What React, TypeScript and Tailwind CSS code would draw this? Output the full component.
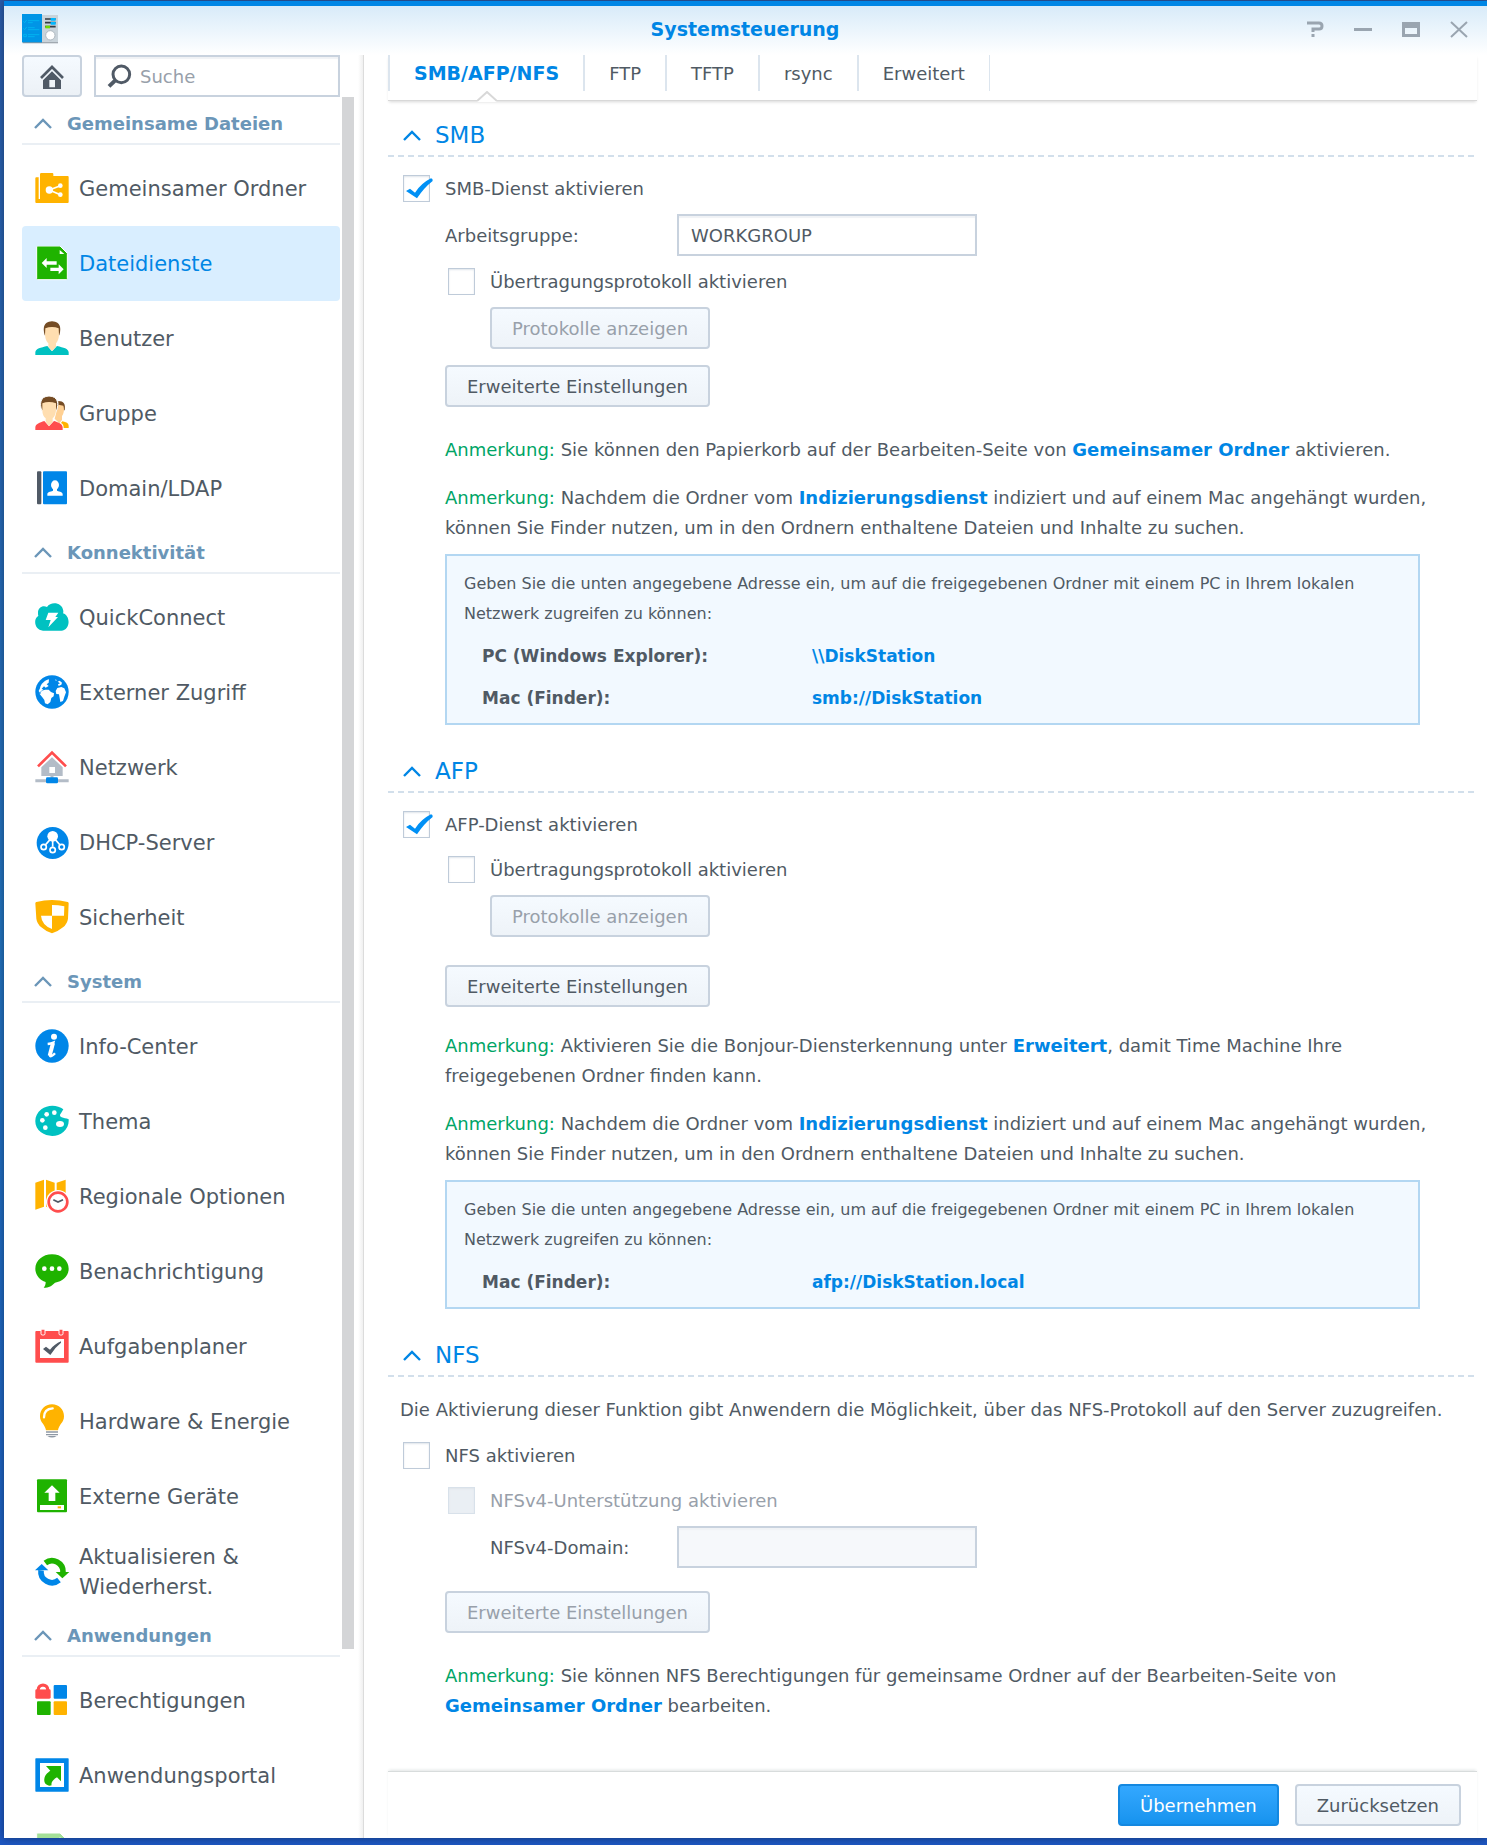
import { useState } from "react";
import type { ReactNode } from "react";
import clsx from "clsx";

interface NavItem {
  label: string;
  icon: ReactNode;
}

interface NavGroup {
  title: string;
  items: NavItem[];
}

const Icon = ({ children }: { children: ReactNode }) => (
  <svg
    viewBox="0 0 105 105"
    className="size-[35px] shrink-0"
    fill="none"
    aria-hidden="true"
  >
    {children}
  </svg>
);

const SharedFolderIcon = () => (
  <Icon>
    <path
      fill="#ffb300"
      d="M1 22q0-3 3-3h11v-9q0-4 4-4h33q3 0 3 3v6h43q3 0 3 3v75q0 3-3 3H4q-3 0-3-3z"
    />
    <path d="M13 6v78" stroke="#fff" strokeWidth="4" />
    <path d="M76 44 43 57l33 14" stroke="#fff" strokeWidth="5" />
    <circle cx="43" cy="57" r="11" fill="#fff" />
    <circle cx="76" cy="44" r="7" fill="#fff" />
    <circle cx="76" cy="71" r="7" fill="#fff" />
  </Icon>
);

const FileServicesIcon = () => (
  <Icon>
    <path
      fill="#1fb300"
      stroke="#fff"
      strokeWidth="3"
      d="M8 0h67l22 22v76q0 3-3 3H8q-3 0-3-3V3q0-3 3-3z"
    />
    <path fill="#fff" d="M74 12v12h14z" />
    <path
      fill="#fff"
      d="M20 51 35 36v10h30v10H35v10zM86 70 71 85V75H46V65h25V55z"
    />
  </Icon>
);

const UserIcon = () => (
  <Icon>
    <path
      fill="#754c24"
      d="M29 43C24 25 23 2 51 1c28 1 27 24 22 42z"
    />
    <path
      fill="#00c1c1"
      d="M1 102v-8c1-12 16-14 36-19l14 16 15-16c20 5 34 7 35 19v8z"
    />
    <path
      fill="#ffdeb0"
      d="M31 22q20-8 40 0l1 20c-1 14-5 20-9 25v10L51 90 40 77V67c-5-5-9-12-10-25z"
    />
  </Icon>
);

const GroupIcon = () => (
  <Icon>
    <path fill="#754c24" d="M70 15c16 0 22 8 19 28H70z" />
    <path
      fill="#ffd093"
      d="M70 26q8 2 15 3c4 12 1 25-4 31v12l-8 10-14-14z"
    />
    <path fill="#ffb300" d="M82 76c12 2 19 6 19 13v7H86c0-8-2-12-8-15z" />
    <path
      fill="#754c24"
      stroke="#fff"
      strokeWidth="3"
      d="M20 43C14 25 14 1 42 0c29 1 29 25 23 43z"
    />
    <path
      fill="#ff4d4d"
      d="M1 102v-8c1-11 13-14 27-19l14 16 15-16c15 5 25 8 26 19v8z"
    />
    <path
      fill="#ffdeb0"
      d="M22 22q20-8 41 0v20c-1 14-5 20-10 25v10L42 90 32 77V67c-6-5-10-12-10-25z"
    />
  </Icon>
);

const DomainIcon = () => (
  <Icon>
    <rect x="6" y="1" width="13" height="99" rx="3" fill="#505a66" />
    <rect x="24" y="1" width="72" height="99" rx="3" fill="#0086e8" />
    <ellipse cx="60" cy="42" rx="12" ry="14" fill="#fff" />
    <path
      fill="#fff"
      d="M54 50h12v9c9 4 17 3 17 11v4H37v-4c0-8 8-7 17-11z"
    />
  </Icon>
);

const QuickConnectIcon = () => (
  <Icon>
    <path
      fill="#00c1c1"
      d="M24 92C-2 90-6 56 10 48 4 24 22 14 36 21c12-18 46-14 49 12 0 4 0 5-1 7 24 8 22 50-5 52z"
    />
    <path fill="#fff" d="M40 38h30l-9 13h8L40 82l7-22H32z" />
  </Icon>
);

const GlobeIcon = () => (
  <Icon>
    <circle cx="51" cy="51" r="50" fill="#0086e8" />
    <path
      fill="#fff"
      d="M42 13C28 17 17 27 15 40l-4 8 7 10-1-8 8-4 6-2 10 0 7 7 9 4-1 9-7 5-3 12-8 7-8-3-2-10-6-8-8-10 3-8 8-5-5-3 7-7 5 4 9-5-6-5 6-5z"
    />
    <path
      fill="#fff"
      d="m62 48 5-9 12-3 9 4 5 12-5 13-4 13-8 3-2-12-2-11-8-1zM61 13l5 3-4 1zM68 20l6-3 7 6-2 6-8 4-2-5 6-3z"
    />
  </Icon>
);

const NetworkIcon = () => (
  <Icon>
    <path d="M9 49 51 8l42 41" stroke="#ff4d4d" strokeWidth="8" />
    <path
      fill="#b3bcc7"
      fillRule="evenodd"
      d="M51 22 19 52v26h64V52zM43 51h17v18H43z"
    />
    <path d="M1 92h100M51 78v10" stroke="#b3bcc7" strokeWidth="9" />
    <rect x="33" y="82" width="36" height="18" rx="4" fill="#0086e8" />
  </Icon>
);

const DhcpIcon = () => (
  <Icon>
    <circle cx="53" cy="54" r="48" fill="#0086e8" />
    <circle cx="53" cy="34" r="16" fill="#fff" />
    <g stroke="#fff" strokeWidth="5">
      <path d="M53 45v20M45 44 31 60M61 44l14 16" />
      <circle cx="26" cy="66" r="8" />
      <circle cx="53" cy="75" r="8" />
      <circle cx="80" cy="66" r="8" />
    </g>
  </Icon>
);

const ShieldIcon = () => (
  <Icon>
    <path
      fill="#ffb300"
      d="M4 6q47-12 94 0 3 1 3 4l-2 46q-2 15-15 26-14 12-33 18-19-6-32-18Q6 71 4 56L1 10q0-3 3-4z"
    />
    <path fill="#fff" d="M51 15q18 0 37 4l-1 28H51zM18 47h33v40Q20 75 18 47z" />
  </Icon>
);

const InfoIcon = () => (
  <Icon>
    <circle cx="51" cy="51" r="50" fill="#0086e8" />
    <circle cx="57" cy="23" r="9" fill="#fff" />
    <path
      d="M38 45q11-1 17-4L45 75q-2 9 5 6 5-2 10-8"
      stroke="#fff"
      strokeWidth="7"
    />
    <path d="M54 42 44 80" stroke="#fff" strokeWidth="12" />
  </Icon>
);

const ThemeIcon = () => (
  <Icon>
    <path
      fill="#00c1c1"
      d="M85 16C68 2 38 1 19 16c-24 18-24 52-1 69 20 15 50 14 67-1 12-10 17-24 16-38-8-3-15-4-21-6q-9-4-2-12z"
    />
    <g fill="#fff">
      <circle cx="58" cy="26" r="7" />
      <circle cx="35" cy="31" r="7" />
      <circle cx="22" cy="49" r="7" />
      <circle cx="31" cy="71" r="7" />
      <ellipse cx="75" cy="60" rx="12" ry="9" />
    </g>
  </Icon>
);

const RegionIcon = () => (
  <Icon>
    <path
      fill="#ffb300"
      d="m1 11 26-9v81L1 92zM33 2l26 9v81l-26-9zM65 11l27-9v81l-27 9z"
    />
    <circle cx="69" cy="69" r="36" fill="#fff" />
    <circle cx="69" cy="69" r="28" stroke="#ff4d4d" strokeWidth="8" />
    <path d="m55 62 14 7 15-7" stroke="#505a66" strokeWidth="5" />
  </Icon>
);

const NotificationIcon = () => (
  <Icon>
    <path
      fill="#1fb300"
      d="M51 1c28 0 50 19 50 43 0 23-19 38-41 42-9 9-18 15-34 15 4-4 6-9 6-17C14 78 1 63 1 44 1 20 23 1 51 1z"
    />
    <circle cx="28" cy="44" r="7" fill="#fff" />
    <circle cx="51" cy="44" r="7" fill="#fff" />
    <circle cx="73" cy="44" r="7" fill="#fff" />
  </Icon>
);

const SchedulerIcon = () => (
  <Icon>
    <rect x="1" y="6" width="100" height="95" rx="3" fill="#ff4d4d" />
    <rect x="15" y="30" width="72" height="57" fill="#fff" />
    <rect
      x="18"
      y="1"
      width="12"
      height="17"
      rx="4"
      fill="#ff4d4d"
      stroke="#fff"
      strokeWidth="3"
    />
    <rect
      x="72"
      y="1"
      width="12"
      height="17"
      rx="4"
      fill="#ff4d4d"
      stroke="#fff"
      strokeWidth="3"
    />
    <path fill="#505a66" d="m24 60 9-7 12 9q14-17 33-25v4Q60 55 46 78z" />
  </Icon>
);

const EnergyIcon = () => (
  <Icon>
    <path
      fill="#ffb300"
      d="M51 1c21 0 36 16 36 36 0 19-15 24-18 42H33C30 61 15 56 15 37 15 17 30 1 51 1z"
    />
    <path
      d="M27 40c0-16 9-26 26-27"
      stroke="#fff"
      strokeWidth="7"
      strokeLinecap="round"
    />
    <path fill="#8e98a4" d="M33 82h36v4H33zM33 90h36v4H33zM37 96h28q-14 9-28 0z" />
  </Icon>
);

const ExternalDeviceIcon = () => (
  <Icon>
    <rect x="6" y="1" width="90" height="99" rx="3" fill="#1fb300" />
    <path fill="#fff" d="m51 19 23 22H61v25H41V41H28zM15 78h72v15H15z" />
    <path fill="#ffb300" d="M68 82h10v6H68z" />
  </Icon>
);

const UpdateIcon = () => (
  <Icon>
    <path d="M31 27a33 33 0 0 1 53 28" stroke="#1fb300" strokeWidth="17" />
    <path fill="#1fb300" d="M62 54h41L82 73z" />
    <path d="M72 78a33 33 0 0 1-54-29" stroke="#0086e8" strokeWidth="17" />
    <path fill="#0086e8" d="M0 49h40L20 30z" />
  </Icon>
);

const PrivilegesIcon = () => (
  <Icon>
    <path
      d="M10 26v-6c0-18 28-18 28 0v6"
      stroke="#ff4d4d"
      strokeWidth="10"
    />
    <rect x="1" y="19" width="46" height="28" rx="4" fill="#ff4d4d" />
    <path fill="#fff" d="M14 19q10-15 19 0z" />
    <rect x="56" y="6" width="40" height="41" rx="3" fill="#0086e8" />
    <rect x="6" y="55" width="41" height="41" rx="3" fill="#1fb300" />
    <rect x="56" y="55" width="40" height="41" rx="3" fill="#ffb300" />
  </Icon>
);

const PortalIcon = () => (
  <Icon>
    <rect x="1" y="1" width="100" height="100" rx="2" fill="#0086e8" />
    <rect x="15" y="15" width="72" height="72" fill="#fff" />
    <path
      fill="#1fb300"
      d="M33 24h45v46L66 58q-20 12-16 24C36 86 26 76 28 63c1-12 9-18 18-25z"
    />
  </Icon>
);

const navGroups: NavGroup[] = [
  {
    title: "Gemeinsame Dateien",
    items: [
      { label: "Gemeinsamer Ordner", icon: <SharedFolderIcon /> },
      { label: "Dateidienste", icon: <FileServicesIcon /> },
      { label: "Benutzer", icon: <UserIcon /> },
      { label: "Gruppe", icon: <GroupIcon /> },
      { label: "Domain/LDAP", icon: <DomainIcon /> },
    ],
  },
  {
    title: "Konnektivität",
    items: [
      { label: "QuickConnect", icon: <QuickConnectIcon /> },
      { label: "Externer Zugriff", icon: <GlobeIcon /> },
      { label: "Netzwerk", icon: <NetworkIcon /> },
      { label: "DHCP-Server", icon: <DhcpIcon /> },
      { label: "Sicherheit", icon: <ShieldIcon /> },
    ],
  },
  {
    title: "System",
    items: [
      { label: "Info-Center", icon: <InfoIcon /> },
      { label: "Thema", icon: <ThemeIcon /> },
      { label: "Regionale Optionen", icon: <RegionIcon /> },
      { label: "Benachrichtigung", icon: <NotificationIcon /> },
      { label: "Aufgabenplaner", icon: <SchedulerIcon /> },
      { label: "Hardware & Energie", icon: <EnergyIcon /> },
      { label: "Externe Geräte", icon: <ExternalDeviceIcon /> },
      { label: "Aktualisieren & Wiederherst.", icon: <UpdateIcon /> },
    ],
  },
  {
    title: "Anwendungen",
    items: [
      { label: "Berechtigungen", icon: <PrivilegesIcon /> },
      { label: "Anwendungsportal", icon: <PortalIcon /> },
    ],
  },
];

const tabs = ["SMB/AFP/NFS", "FTP", "TFTP", "rsync", "Erweitert"];

const Chevron = () => (
  <svg
    viewBox="0 0 18 11"
    className="h-[11px] w-[18px] shrink-0"
    fill="none"
    stroke="currentColor"
    strokeWidth="2.4"
    aria-hidden="true"
  >
    <path d="m1 10 8-8 8 8" />
  </svg>
);

const TitleBar = () => (
  <header className="grid h-[49px] shrink-0 grid-cols-[1fr_auto_1fr] items-center bg-linear-to-b from-[#d8ebf9] to-white pr-[19px] pb-[3px] pl-[18px]">
    <svg viewBox="0 0 108 90" className="h-[30px] w-9" aria-hidden="true">
      <path fill="#8d959b" d="M2 84h106v4H2z" />
      <path fill="#0095e6" d="M0 0h60v85H0z" />
      <path fill="#c9d3da" d="M60 3h48v82H60z" />
      <g stroke="#00b4f0" strokeWidth="3" fill="none">
        <path d="m4 22 4 4 6-8M18 20h34M18 26h14M4 43l4 4 6-8M18 41h20M18 47h34M5 61h8v7H5zM18 62h34M18 68h20" />
      </g>
      <g strokeWidth="5">
        <path d="M69 15h32M69 26h32M69 38h32" stroke="#333b42" />
        <path d="M86 16h15M86 28h15" stroke="#00b7ff" strokeWidth="8" />
        <path d="M70 39h14" stroke="#6ddc00" strokeWidth="8" />
      </g>
      <circle cx="85" cy="64" r="14" fill="#fff" stroke="#aeb8c0" strokeWidth="3" />
    </svg>
    <h1 className="text-[19px] leading-7 font-bold text-[#0086e5]">
      Systemsteuerung
    </h1>
    <div className="flex justify-end gap-[30px]">
      <button aria-label="Hilfe">
        <svg viewBox="0 0 18 18" className="size-[18px]" fill="none">
          <path
            d="M1 3h12q3 0 3 3t-3 3H7v3M7 14v3"
            stroke="#9aa5b0"
            strokeWidth="3"
          />
        </svg>
      </button>
      <button aria-label="Minimieren">
        <svg viewBox="0 0 18 18" className="size-[18px]">
          <path d="M0 8h18v3H0z" fill="#9aa5b0" />
        </svg>
      </button>
      <button aria-label="Maximieren">
        <svg viewBox="0 0 18 18" className="size-[18px]">
          <path
            fill="#9aa5b0"
            fillRule="evenodd"
            d="M0 2h18v15H0zM3 8v6h12V8z"
          />
        </svg>
      </button>
      <button aria-label="Schließen">
        <svg viewBox="0 0 18 18" className="size-[18px]">
          <path d="m1 2 16 15M17 2 1 17" stroke="#9aa5b0" strokeWidth="2" />
        </svg>
      </button>
    </div>
  </header>
);

const Sidebar = () => {
  const [active, setActive] = useState("Dateidienste");

  return (
    <aside className="flex w-[360px] shrink-0 flex-col border-r border-[#dcdcdc] bg-linear-to-l from-[#f0f0f0] to-white to-[5px] pl-[18px]">
      <div className="flex w-[318px] gap-3">
        <button
          aria-label="Startseite"
          className="flex h-[42px] w-[60px] items-center justify-center rounded-[4px] border-2 border-[#c8d2de] bg-linear-to-b from-[#f5faff] to-[#ecf1f6]"
        >
          <svg viewBox="0 0 72 75" className="h-[25px] w-6" fill="#505a66">
            <path
              d="M3 42 36 9l33 33"
              fill="none"
              stroke="#505a66"
              strokeWidth="8"
            />
            <path
              fillRule="evenodd"
              d="m36 22 27 27v26H9V49zM28 48v22h17V48z"
            />
          </svg>
        </button>
        <label className="flex h-[42px] min-w-0 flex-1 items-center gap-2 border-2 border-[#c8d2de] bg-white pl-[11px] inset-shadow-[0_2px_1px_#f0f2f5]">
          <svg
            viewBox="0 0 75 75"
            className="size-[25px] shrink-0"
            fill="none"
            stroke="#505a66"
            aria-hidden="true"
          >
            <circle cx="43" cy="31" r="25" strokeWidth="9" />
            <path d="M24 50 6 67" strokeWidth="12" />
          </svg>
          <input
            type="search"
            aria-label="Suche"
            placeholder="Suche"
            className="w-full min-w-0 text-[18px] outline-none placeholder:text-[#98a0aa]"
          />
        </label>
      </div>

      <div className="flex min-h-0 flex-1">
        <nav className="w-[318px] overflow-hidden">
          {navGroups.map((group) => (
            <section key={group.title}>
              <h2 className="mb-1.5 border-b-2 border-[#eaeff4] pl-3">
                <button className="flex h-[46px] items-center gap-[15px] pt-[7px] text-[18px] font-bold text-[#6b96b8]">
                  <Chevron />
                  {group.title}
                </button>
              </h2>
              <ul>
                {group.items.map((item) => (
                  <li key={item.label}>
                    <a
                      href="#"
                      onClick={(e) => {
                        e.preventDefault();
                        setActive(item.label);
                      }}
                      className={clsx(
                        "flex h-[75px] items-center gap-[9px] rounded-[4px] pl-[13px] text-[21px] leading-[30px]",
                        item.label === active && "bg-[#d9eeff] text-[#0086e5]",
                      )}
                    >
                      {item.icon}
                      <span>{item.label}</span>
                    </a>
                  </li>
                ))}
              </ul>
            </section>
          ))}
          <div className="flex h-[75px] items-center pl-[13px] opacity-40">
            <FileServicesIcon />
          </div>
        </nav>
        <div className="mb-[189px] ml-0.5 w-3 bg-[#d4d5d7]" />
      </div>
    </aside>
  );
};

const TabBar = () => {
  const [active, setActive] = useState(tabs[0]);

  return (
    <div
      role="tablist"
      className="flex h-[46px] shrink-0 items-start border-b border-[#d8d8d8] shadow-[0_2px_3px_-1px_#d8d8d8]"
    >
      {tabs.map((tab) => (
        <button
          key={tab}
          role="tab"
          aria-selected={tab === active}
          onClick={() => setActive(tab)}
          className={clsx(
            "relative h-9 border-r-2 border-[#dce5ee] px-6 first:border-l-2 last:border-r",
            tab === active
              ? "text-[19px] font-bold text-[#0086e5]"
              : "text-[18px]",
          )}
        >
          {tab}
          {tab === active && (
            <svg
              viewBox="0 0 20 11"
              className="absolute top-9 left-1/2 h-[11px] w-5 -translate-x-1/2"
              aria-hidden="true"
            >
              <path d="m0 9 10-9 10 9v2H0z" fill="#fff" />
              <path d="m0 10 10-9 10 9" fill="none" stroke="#d8d8d8" strokeWidth="2" />
            </svg>
          )}
        </button>
      ))}
    </div>
  );
};

const Section = ({ title, children }: { title: string; children: ReactNode }) => (
  <section className="mb-[31px]">
    <h2 className="pb-[5px] pl-[15px] text-[23px] leading-[30px] text-[#0086e5]">
      <button className="flex items-center gap-[14px]">
        <Chevron />
        {title}
      </button>
    </h2>
    <div className="h-0.5 bg-[repeating-linear-gradient(to_right,#d2dfeb_0_6px,transparent_6px_10px)]" />
    <div className="pt-[18px]">{children}</div>
  </section>
);

interface CheckboxProps {
  label: string;
  checked?: boolean;
  disabled?: boolean;
  className?: string;
}

const Checkbox = ({ label, checked, disabled, className }: CheckboxProps) => (
  <label
    className={clsx(
      "flex w-fit items-center gap-[15px] leading-[27px]",
      disabled && "text-[#98a0aa]",
      className,
    )}
  >
    <span className="relative size-[27px]">
      <input
        type="checkbox"
        defaultChecked={checked}
        disabled={disabled}
        className="peer block size-[27px] appearance-none border border-[#bfcbd9] bg-white inset-shadow-[0_1px_2px_#dfe4ea] disabled:border-[#d8e1ea] disabled:bg-[#eaeff4]"
      />
      <svg
        viewBox="0 0 90 81"
        className="pointer-events-none absolute top-0 left-0 hidden h-[27px] w-[30px] peer-checked:block"
        aria-hidden="true"
      >
        <path
          fill="#0090f5"
          d="m9 48 12-7 15 12Q54 25 84 10q6 1 5 8-26 20-47 52z"
        />
      </svg>
    </span>
    {label}
  </label>
);

interface ButtonProps {
  children: ReactNode;
  primary?: boolean;
  disabled?: boolean;
  className?: string;
}

const Button = ({ children, primary, disabled, className }: ButtonProps) => (
  <button
    disabled={disabled}
    className={clsx(
      "block h-[42px] rounded-[4px] border-2 bg-linear-to-b px-5",
      primary
        ? "border-[#1488e0] from-[#33a8ff] to-[#1693ee] text-white"
        : "border-[#c8d2de] from-[#f5faff] to-[#eef3f8] disabled:text-[#98a0aa]",
      className,
    )}
  >
    {children}
  </button>
);

interface FieldProps {
  id: string;
  label: string;
  value?: string;
  disabled?: boolean;
  labelClass: string;
}

const Field = ({ id, label, value, disabled, labelClass }: FieldProps) => (
  <div className="mt-3 flex items-center">
    <label htmlFor={id} className={labelClass}>
      {label}
    </label>
    <input
      id={id}
      type="text"
      defaultValue={value}
      disabled={disabled}
      className="h-[42px] w-[300px] border-2 border-[#c8d2de] bg-white px-3 inset-shadow-[0_2px_1px_#f0f2f5] outline-none disabled:bg-[#f6f8fb]"
    />
  </div>
);

const Link = ({ children }: { children: ReactNode }) => (
  <a href="#" className="font-bold text-[#0086e5]">
    {children}
  </a>
);

const Note = ({ children }: { children: ReactNode }) => (
  <p className="mb-[18px] pl-[57px] leading-[30px]">
    <span className="text-[#00a566]">Anmerkung:</span> {children}
  </p>
);

const AddressBox = ({ rows }: { rows: [string, string][] }) => (
  <div className="mx-[57px] -mt-[7px] border-2 border-[#b3d7f2] bg-[#f2f9ff] px-[17px] pt-[13px] pb-[3px]">
    <p className="mb-[7px] text-[16px] leading-[30px]">
      Geben Sie die unten angegebene Adresse ein, um auf die freigegebenen
      Ordner mit einem PC in Ihrem lokalen Netzwerk zugreifen zu können:
    </p>
    <table className="ml-[18px] text-left text-[17px] font-bold">
      <tbody>
        {rows.map(([client, address]) => (
          <tr key={client} className="h-[42px]">
            <th scope="row" className="w-[330px]">
              {client}
            </th>
            <td className="text-[#0086e5]">{address}</td>
          </tr>
        ))}
      </tbody>
    </table>
  </div>
);

const IndexNote = () => (
  <Note>
    Nachdem die Ordner vom <Link>Indizierungsdienst</Link> indiziert und auf
    einem Mac angehängt wurden, können Sie Finder nutzen, um in den Ordnern
    enthaltene Dateien und Inhalte zu suchen.
  </Note>
);

const FileServices = () => (
  <div className="min-h-0 flex-1 overflow-hidden pt-[19px]">
    <Section title="SMB">
      <Checkbox label="SMB-Dienst aktivieren" checked className="ml-[15px]" />
      <Field
        id="workgroup"
        label="Arbeitsgruppe:"
        value="WORKGROUP"
        labelClass="w-[289px] pl-[57px]"
      />
      <Checkbox
        label="Übertragungsprotokoll aktivieren"
        className="mt-3 ml-[60px]"
      />
      <Button disabled className="mt-3 ml-[102px]">
        Protokolle anzeigen
      </Button>
      <Button className="mt-4 mb-7 ml-[57px]">Erweiterte Einstellungen</Button>
      <Note>
        Sie können den Papierkorb auf der Bearbeiten-Seite von{" "}
        <Link>Gemeinsamer Ordner</Link> aktivieren.
      </Note>
      <IndexNote />
      <AddressBox
        rows={[
          ["PC (Windows Explorer):", "\\\\DiskStation"],
          ["Mac (Finder):", "smb://DiskStation"],
        ]}
      />
    </Section>

    <Section title="AFP">
      <Checkbox label="AFP-Dienst aktivieren" checked className="ml-[15px]" />
      <Checkbox
        label="Übertragungsprotokoll aktivieren"
        className="mt-[18px] ml-[60px]"
      />
      <Button disabled className="mt-3 ml-[102px]">
        Protokolle anzeigen
      </Button>
      <Button className="mt-7 mb-6 ml-[57px]">Erweiterte Einstellungen</Button>
      <Note>
        Aktivieren Sie die Bonjour-Diensterkennung unter <Link>Erweitert</Link>,
        damit Time Machine Ihre freigegebenen Ordner finden kann.
      </Note>
      <IndexNote />
      <AddressBox rows={[["Mac (Finder):", "afp://DiskStation.local"]]} />
    </Section>

    <Section title="NFS">
      <p className="pl-3 leading-[30px]">
        Die Aktivierung dieser Funktion gibt Anwendern die Möglichkeit, über das
        NFS-Protokoll auf den Server zuzugreifen.
      </p>
      <Checkbox label="NFS aktivieren" className="mt-[17px] ml-[15px]" />
      <Checkbox
        label="NFSv4-Unterstützung aktivieren"
        disabled
        className="mt-[18px] ml-[60px]"
      />
      <Field
        id="nfs-domain"
        label="NFSv4-Domain:"
        disabled
        labelClass="w-[289px] pl-[102px]"
      />
      <Button disabled className="mt-[23px] mb-7 ml-[57px]">
        Erweiterte Einstellungen
      </Button>
      <Note>
        Sie können NFS Berechtigungen für gemeinsame Ordner auf der
        Bearbeiten-Seite von <Link>Gemeinsamer Ordner</Link> bearbeiten.
      </Note>
    </Section>
  </div>
);

const App = () => {
  return (
    <div className="flex h-screen flex-col bg-linear-to-b from-[#2a5caa] via-[#2272bd] to-[#1d56c0] pt-px pb-[7px] pl-1 font-['DejaVu_Sans',Verdana,sans-serif] text-[18px] text-[#505a64]">
      <div className="flex min-h-0 flex-1 flex-col border-t-[5px] border-[#0086e5] bg-white shadow-[0_0_8px_#00000066]">
        <TitleBar />
        <div className="flex min-h-0 flex-1">
          <Sidebar />
          <main className="flex min-w-0 flex-1 flex-col pr-2.5 pl-6">
            <TabBar />
            <FileServices />
            <footer className="flex shrink-0 justify-end gap-4 border-t border-[#d8dcdc] py-3 pr-4 shadow-[0_-2px_3px_-1px_#e0e4e4]">
              <Button primary>Übernehmen</Button>
              <Button>Zurücksetzen</Button>
            </footer>
          </main>
        </div>
      </div>
    </div>
  );
};

export default App;
